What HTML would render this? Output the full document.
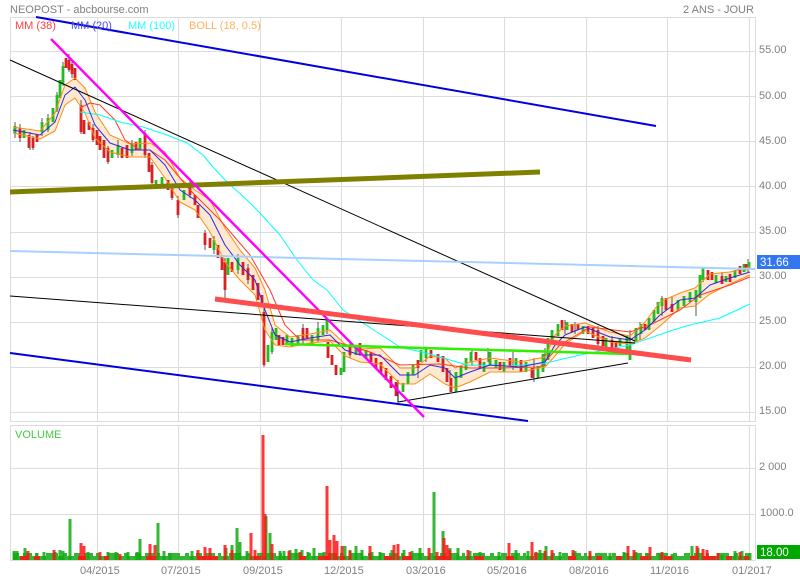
<!DOCTYPE html>
<html><head><meta charset="utf-8"><style>
html,body{margin:0;padding:0;background:#fff}
svg{display:block}
text{font-family:"Liberation Sans",sans-serif;font-size:11px;fill:#808080}
</style></head><body>
<svg width="800" height="580" viewBox="0 0 800 580" xmlns="http://www.w3.org/2000/svg">
<rect width="800" height="580" fill="#fff"/>
<g stroke="#dcdcdc" fill="none">
<path d="M10.5 17.5H755.5V421.5H10.5Z M10.5 425.5H755.5V560.5H10.5Z"/>
<path d="M10 51.5H755M10 96.5H755M10 141.5H755M10 186.5H755M10 232.5H755M10 277.5H755M10 322.5H755M10 367.5H755M10 412.5H755M10 468.5H755M10 514.5H755"/>
<path d="M97.5 17V421M178.5 17V421M260.5 17V421M341.5 17V421M423.5 17V421M504.5 17V421M586.5 17V421M667.5 17V421M749.5 17V421M97.5 425V560M178.5 425V560M260.5 425V560M341.5 425V560M423.5 425V560M504.5 425V560M586.5 425V560M667.5 425V560M749.5 425V560"/>
</g>

<!-- Bollinger band -->
<path d="M13 127L40 131 55 113 65 85 75 78 85 88 95 112 110 135 130 144 150 143 165 152 180 178 195 190 210 200 225 228 240 250 255 268 265 290 275 325 290 337 310 334 330 330 345 344 360 349 380 348 400 368 415 368 430 356 445 358 455 368 470 362 490 358 520 362 545 357 555 335 565 326 585 323 610 332 630 336 645 322 660 302 680 293 695 288 710 274 730 272 750 267 750 275 730 284 710 294 695 306 680 308 660 326 645 338 630 344 610 342 585 331 565 344 555 356 545 367 520 372 490 372 470 382 455 388 445 384 430 374 415 384 400 384 380 364 360 362 345 356 330 341 310 343 290 347 275 345 265 330 255 295 240 280 225 262 210 232 195 210 180 202 165 178 150 157 130 157 110 152 95 138 85 113 75 98 65 105 55 131 40 139 13 133Z" fill="#fde9d2"/>

<!-- candles wicks -->
<g fill="none">
<path stroke="#555" stroke-width="1" d="M15 122V138M20 124V142M30 132V150M33 136V150M42 118V136M48 114V132M57 92V112M63 62V86M69 54V72M72 60V78M81 100V134M93 124V142M108 146V164M118 140V158M132 140V156M145 130V158M152 162V184M172 184V200M178 196V218M190 178V198M205 230V250M214 236V254M225 258V300M238 254V274M248 264V284M264 308V367M272 328V354M303 324V344M318 322V342M327 318V334M350 342V358M398 380V402M418 360V378M426 348V362M450 370V392M472 350V366M488 348V362M513 352V370M534 358V382M545 348V366M565 320V334M575 322V334M598 326V346M612 336V350M630 330V360M640 322V340M662 296V316M672 296V312M696 298V316M703 268V282M722 272V282M748 259V272"/>
<path stroke="#22bb22" stroke-width="2.8" d="M15 126V134M24 130V138M42 122V132M48 118V130M53 108V122M57 95V110M60 80V98M63 66V84M112 150V158M118 145V155M132 143V153M140 138V150M156 180V188M162 177V185M184 190V200M214 240V250M228 258V275M238 258V270M268 345V362M272 332V352M276 328V340M287 335V345M292 338V346M298 335V345M312 335V345M318 328V340M323 325V335M327 320V330M341 368V375M344 352V372M356 345V355M366 350V358M403 383V392M408 372V384M413 365V375M421 350V362M426 348V358M456 372V392M461 366V378M466 358V370M471 352V362M484 362V372M490 352V366M496 360V368M504 362V372M516 358V368M526 362V372M538 366V378M543 354V372M548 338V360M552 330V342M558 324V336M567 322V330M583 326V334M606 338V348M620 338V346M627 336V350M630 345V360M636 328V342M641 324V334M649 318V330M654 310V322M658 302V314M662 298V306M678 300V310M684 296V306M690 292V302M696 290V302M700 275V298M703 268V280M716 275V283M726 276V282M735 270V278M744 264V272M749 262V268"/>
<path stroke="#d62222" stroke-width="2.8" d="M20 128V138M29 135V148M33 138V148M37 134V142M66 58V68M69 60V70M72 64V74M75 68V80M81 105V132M84 120V134M89 122V130M93 128V140M97 130V145M100 136V150M104 140V158M108 148V162M122 148V158M127 145V158M136 142V150M145 133V155M149 153V172M152 165V183M168 180V190M172 188V198M178 200V215M190 183V195M195 195V205M198 205V218M205 233V245M210 238V248M218 245V258M222 255V270M225 262V290M232 262V272M243 262V275M248 268V280M253 275V290M258 283V300M262 295V305M264 312V365M279 335V345M283 337V345M303 328V340M307 328V338M328 342V358M332 355V365M336 365V375M350 345V355M360 343V355M371 352V362M376 358V368M381 362V374M386 368V380M391 376V388M396 382V396M418 360V368M431 350V358M438 354V362M443 356V372M447 368V382M451 378V392M476 352V360M480 358V368M500 362V370M510 358V366M521 360V372M532 368V378M562 320V330M572 324V332M578 324V330M588 326V334M593 328V338M598 330V344M603 336V346M612 340V348M616 342V350M645 324V330M666 298V310M672 304V312M708 270V280M712 272V280M722 276V284M730 274V282M740 266V274M746 264V270"/>
</g>

<!-- indicators -->
<g fill="none" stroke-linejoin="round">
<path stroke="#ff8c14" stroke-width="1" d="M13 127L40 131 55 113 65 85 75 78 85 88 95 112 110 135 130 144 150 143 165 152 180 178 195 190 210 200 225 228 240 250 255 268 265 290 275 325 290 337 310 334 330 330 345 344 360 349 380 348 400 368 415 368 430 356 445 358 455 368 470 362 490 358 520 362 545 357 555 335 565 326 585 323 610 332 630 336 645 322 660 302 680 293 695 288 710 274 730 272 750 267"/>
<path stroke="#ff8c14" stroke-width="1" d="M13 133L40 139 55 131 65 105 75 98 85 113 95 138 110 152 130 157 150 157 165 178 180 202 195 210 210 232 225 262 240 280 255 295 265 330 275 345 290 347 310 343 330 341 345 356 360 362 380 364 400 384 415 384 430 374 445 384 455 388 470 382 490 372 520 372 545 367 555 356 565 344 585 331 610 342 630 344 645 338 660 326 680 308 695 306 710 294 730 284 750 275"/>
<path stroke="#ff3c28" stroke-width="1" d="M80 108L90 103 100 105 115 120 125 140 140 150 150 150 165 160 190 190 220 220 250 255 270 290 285 325 300 340 330 340 370 352 400 365 440 364 470 368 500 368 540 367 560 345 590 327 630 332 650 325 680 310 700 295 730 285 750 277"/>
<path stroke="#00ffff" stroke-width="1" d="M80 112L100 115 120 122 143 127 167 135 187 143 203 155 213 167 227 182 247 200 260 213 280 235 297 260 313 280 327 290 343 310 363 323 400 347 430 354 467 365 510 366 546 363 580 355 630 345 673 330 690 325 720 318 750 304"/>
<path stroke="#2c2ce0" stroke-width="1" d="M13 130L40 135 55 122 65 95 75 87 85 100 95 125 110 143 130 150 150 150 165 165 180 190 195 200 210 215 225 245 240 265 255 280 265 310 275 335 290 342 310 338 330 335 345 350 360 355 380 355 400 375 415 375 430 365 445 368 455 378 470 372 490 365 520 367 545 362 555 345 565 335 585 327 610 337 630 340 645 330 660 315 680 300 695 298 710 285 730 278 750 272"/>
</g>

<!-- drawn trend lines -->
<g fill="none">
<path stroke="#000" stroke-width="1" d="M10 60L635 341M10 296L635 343M398 392V402L628 363"/>
<path stroke="#a8d0ff" stroke-width="2" d="M10 251L755 269"/>
<path stroke="#0000e0" stroke-width="2" d="M36 17L656 126"/>
<path stroke="#0000e0" stroke-width="2" d="M10 353L528 421"/>
<path stroke="#808000" stroke-width="5" d="M10 192L540 172"/>
<path stroke="#ff00ff" stroke-width="2.4" d="M51 39L424 417"/>
<path stroke="#33ee00" stroke-width="2.6" d="M285 344L630 354"/>
<path stroke="#ff4c4c" stroke-width="5" d="M215 299L691 360"/>
</g>

<!-- volume -->
<g fill="none" stroke-width="3" stroke-opacity=".85">
<path stroke="#11aa11" d="M13 558H750" stroke-width="4"/>
<path stroke="#11aa11" d="M13 554.5H750" stroke-dasharray="6 4 9 3 3 8 12 5 4 7"/>
<path stroke="#11aa11" d="M14 560v-9M17 560v-9M25 560v-12M37 560v-7M44 560v-8M55 560v-8M60 560v-10M63 560v-9M70 560v-41M88 560v-8M108 560v-8M116 560v-8M128 560v-8M137 560v-8M140 560v-21M158 560v-37M164 560v-9M170 560v-7M192 560v-9M226 560v-12M232 560v-15M237 560v-32M240 560v-18M247 560v-9M266 560v-44M270 560v-27M280 560v-9M284 560v-9M290 560v-10M296 560v-11M302 560v-10M308 560v-8M314 560v-12M324 560v-8M345 560v-14M350 560v-10M356 560v-14M362 560v-10M372 560v-8M380 560v-8M392 560v-10M404 560v-10M412 560v-9M420 560v-12M434 560v-68M443 560v-29M450 560v-12M458 560v-12M470 560v-9M480 560v-8M499 560v-8M516 560v-10M528 560v-9M540 560v-10M546 560v-14M560 560v-8M575 560v-9M590 560v-7M610 560v-7M624 560v-8M636 560v-8M648 560v-7M660 560v-7M672 560v-6M692 560v-14M698 560v-12M722 560v-5M735 560v-9M742 560v-9M750 560v-7"/>
<path stroke="#ff1414" stroke-width="4" d="M20 558h8M34 558h6M78 558h8M104 558h5M146 558h8M198 558h20M254 558h7M300 558h6M318 558h12M340 558h5M384 558h8M402 558h10M438 558h8M474 558h10M506 558h8M568 558h8M596 558h6M616 558h6M640 558h8M664 558h8M690 558h6M704 558h12M726 558h6M744 558h5"/>
<path stroke="#ff1414" d="M28 560v-9M54 560v-10M81 560v-17M84 560v-14M100 560v-8M120 560v-6M150 560v-16M155 560v-15M198 560v-10M205 560v-13M210 560v-12M225 560v-15M232 560v-10M251 560v-27M255 560v-10M263 560v-125M265 560v-46M272 560v-16M289 560v-9M300 560v-8M327 560v-74M330 560v-20M334 560v-25M337 560v-19M342 560v-14M350 560v-9M370 560v-14M394 560v-15M398 560v-16M410 560v-8M429 560v-12M437 560v-8M444 560v-22M447 560v-15M450 560v-10M468 560v-10M509 560v-17M532 560v-18M536 560v-8M545 560v-9M552 560v-10M573 560v-10M590 560v-9M628 560v-14M634 560v-10M650 560v-13M662 560v-8M697 560v-14M703 560v-11M707 560v-10M718 560v-7M740 560v-8"/>
</g>

<!-- text -->
<text x="10" y="13">NEOPOST - abcbourse.com</text>
<text x="683" y="13">2 ANS - JOUR</text>
<text x="15" y="29" style="fill:#ff4040">MM (38)</text>
<text x="71" y="29" style="fill:#4a4ae8">MM (20)</text>
<text x="128" y="29" style="fill:#22ffff">MM (100)</text>
<text x="189" y="29" style="fill:#ffb060">BOLL (18, 0.5)</text>
<text x="15" y="438" style="fill:#44cc44">VOLUME</text>
<g>
<text x="759" y="53">55.00</text><text x="759" y="99">50.00</text><text x="759" y="144">45.00</text><text x="759" y="189">40.00</text><text x="759" y="234">35.00</text><text x="759" y="279">30.00</text><text x="759" y="324">25.00</text><text x="759" y="369">20.00</text><text x="759" y="414">15.00</text>
<text x="759" y="470">2 000</text><text x="760" y="516">1000.0</text>
<text x="80" y="574">04/2015</text><text x="161" y="574">07/2015</text><text x="243" y="574">09/2015</text><text x="324" y="574">12/2015</text><text x="406" y="574">03/2016</text><text x="487" y="574">05/2016</text><text x="569" y="574">08/2016</text><text x="650" y="574">11/2016</text><text x="732" y="574">01/2017</text>
</g>
<rect x="757" y="255" width="43" height="14" fill="#3377f0"/>
<text x="760" y="266" style="fill:#fff;font-size:11.5px">31.66</text>
<rect x="757" y="545" width="43" height="14" fill="#00a800"/>
<text x="760" y="556" style="fill:#fff;font-size:11.5px">18.00</text>
</svg>
</body></html>
